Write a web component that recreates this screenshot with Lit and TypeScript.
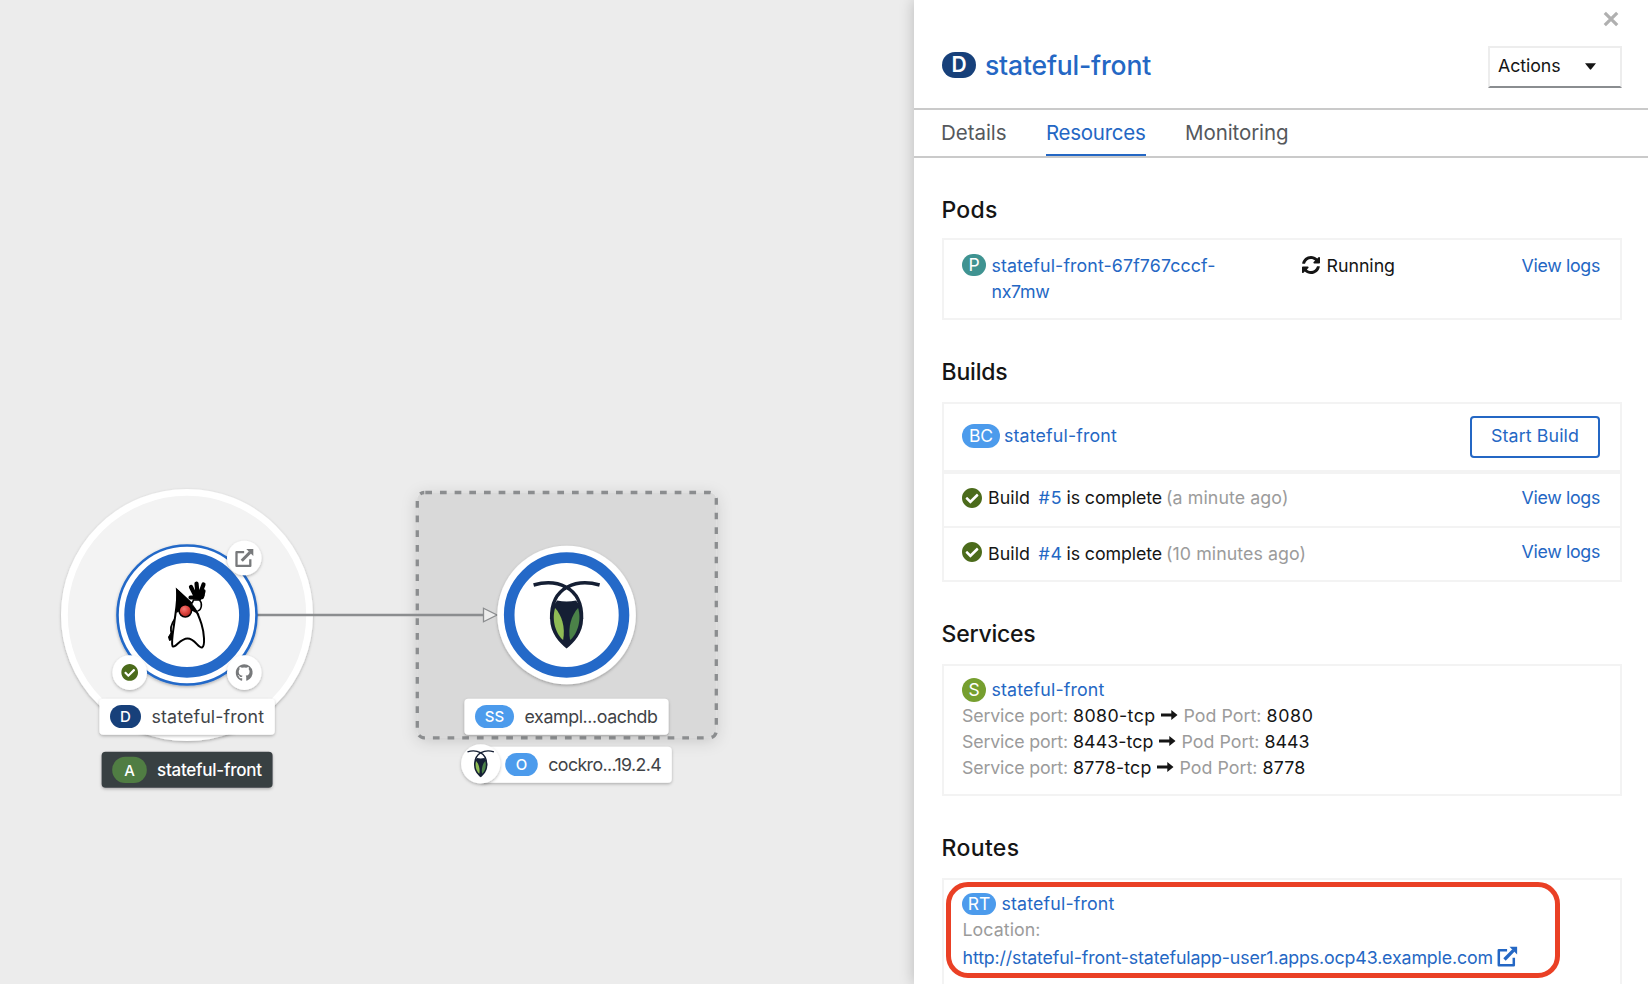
import { LitElement, html, svg, css } from "lit";
import { customElement, property } from "lit/decorators.js";

/** Text run tracked in or out so that it fills a given advance width. */
@customElement("fit-text")
class FitText extends LitElement {
  @property({ type: Number }) w = 0;
  @property() text = "";
  static styles = css`
    :host { display: inline-block; white-space: nowrap; }
  `;
  render() {
    return html`<span>${this.text}</span>`;
  }
  updated() {
    const s = this.renderRoot.querySelector("span") as HTMLElement;
    s.style.letterSpacing = "0px";
    const natural = s.getBoundingClientRect().width;
    if (this.w) s.style.letterSpacing = `${(this.w - natural) / this.text.length}px`;
  }
}

const t = (text: string, w: number) => html`<fit-text .text=${text} .w=${w}></fit-text>`;

const checkPath =
  "M504 256c0 136.967-111.033 248-248 248S8 392.967 8 256 119.033 8 256 8s248 111.033 248 248zM227.314 387.314l184-184c6.248-6.248 6.248-16.379 0-22.627l-22.627-22.627c-6.248-6.249-16.379-6.249-22.628 0L216 308.118l-70.059-70.059c-6.248-6.248-16.379-6.248-22.628 0l-22.627 22.627c-6.248 6.248-6.248 16.379 0 22.627l104 104c6.249 6.249 16.379 6.249 22.628.001z";
const syncPath =
  "M370.72 133.28C339.458 104.008 298.888 87.962 255.848 88c-77.458.068-144.328 53.178-162.791 126.85-1.344 5.363-6.122 9.15-11.651 9.15H24.103c-7.498 0-13.194-6.807-11.807-14.176C33.933 94.924 134.813 8 256 8c66.448 0 126.791 26.136 171.315 68.685L463.03 40.97C478.149 25.851 504 36.559 504 57.941V192c0 13.255-10.745 24-24 24H345.941c-21.382 0-32.09-25.851-16.971-40.971l41.75-41.749zM32 296h134.059c21.382 0 32.09 25.851 16.971 40.971l-41.75 41.75c31.262 29.273 71.835 45.319 114.876 45.28 77.418-.07 144.315-53.144 162.787-126.849 1.344-5.363 6.122-9.15 11.651-9.15h57.304c7.498 0 13.194 6.807 11.807 14.176C478.067 417.076 377.187 504 256 504c-66.448 0-126.791-26.136-171.315-68.685L48.97 471.03C33.851 486.149 8 475.441 8 454.059V320c0-13.255 10.745-24 24-24z";
const githubPath =
  "M8 0C3.58 0 0 3.58 0 8c0 3.54 2.29 6.53 5.47 7.59.4.07.55-.17.55-.38V13.2c-2 .4-2.6-.5-2.8-1-.1-.2-.5-1-.9-1.2-.3-.15-.7-.55 0-.56.65 0 1.1.6 1.25.83.72 1.2 1.87.87 2.33.66.07-.52.28-.87.51-1.07-1.78-.2-3.64-.89-3.64-3.95 0-.87.31-1.59.82-2.15-.08-.2-.36-1.02.08-2.12 0 0 .67-.21 2.2.82a7.6 7.6 0 0 1 4 0c1.53-1.04 2.2-.82 2.2-.82.44 1.1.16 1.92.08 2.12.51.56.82 1.27.82 2.15 0 3.07-1.87 3.75-3.65 3.95.29.25.54.73.54 1.48v2.87c0 .21.15.46.55.38A8 8 0 0 0 8 0z";

const extLink = svg`
  <path d="M9.600 3.200H1.300V18.200H16.300V10.800" fill="none" stroke="currentColor" stroke-width="2.500" stroke-linejoin="round"></path>
  <path d="M7 12.500L16 3.400" stroke="currentColor" stroke-width="3.300" fill="none"></path>
  <path d="M12 -.200H19.600V7.400Z" fill="currentColor"></path>`;

const roach = svg`
  <path d="M-9.500 -14.500Q0 -12.500 9.500 -14.500Q16.500 -6 16.500 4C16.500 18 7 28 0 33.500C-7 28 -16.500 18 -16.500 4Q-16.500 -6 -9.500 -14.500Z" fill="#151f34"></path>
  <path d="M-33 -30C-12 -36 16 -30 15 4M33 -30C12 -36 -16 -30 -15 4" fill="none" stroke="#151f34" stroke-width="3.400"></path>
  <path d="M-11.500 -7C-5 0 -1 12 -3.500 25C-10 20 -15.500 6 -11.500 -7Z" fill="#8fbc55"></path>
  <path d="M11.500 -7C5 0 1 12 3.500 25C10 20 15.500 6 11.500 -7Z" fill="#4b8248"></path>`;

const duke = svg`
  <path d="M175.500 618C171 624 170 630 172 634L170 640" fill="none" stroke="#000" stroke-width="1.800"></path>
  <path d="M171.500 632L174 634L172.500 639L169.500 640.500L168.500 637Z" fill="#000" stroke="#000" stroke-width="1"></path>
  <path d="M177 590C178 600 176 610 174.500 621C173 633 171 642 172.500 646C175 649 180 638.500 187.500 638.500C195 638.500 198 648 202 647.500C205.500 646 204 632 201.500 624C199 616 196 610 193.500 605Z" fill="#fff" stroke="#000" stroke-width="2"></path>
  <path d="M176.400 588.500C183 594 193 604 199.500 615L192.500 611L179 611.500L176.300 613Z" fill="#000"></path>
  <path d="M197.500 611C202 610 202.500 603 199.500 600L193.500 600L192 603.500" fill="#fff" stroke="#000" stroke-width="1.600"></path>
  <path d="M190.500 597.500L196 597.500M195.500 596L191 587M197.500 594L196.500 583.500M200 594L203.500 584.500M202 597L203.500 591" stroke="#000" stroke-width="4.200" stroke-linecap="round" fill="none"></path>
  <path d="M193 592L204 590L204.500 596L200.500 600.500L193 599Z" fill="#000"></path>
  <circle cx="185.300" cy="610.800" r="6.200" fill="url(#nose)" stroke="#000" stroke-width="1.600"></circle>`;

const txt = (x: number, y: number, w: number, s: string, cls: string) =>
  svg`<text x=${x} y=${y} textLength=${w} class=${cls}>${s}</text>`;

@customElement("topology-view")
class TopologyView extends LitElement {
  static styles = css`
    :host { display: block; background: #ececec; overflow: hidden; }
    svg { display: block; }
    text { font-family: Inter, "Liberation Sans", sans-serif; }
    .label { font-size: 17.8px; fill: #3f4347; }
    .dark { font-size: 17px; font-weight: 500; fill: #fff; }
    .badge { font-size: 15px; font-weight: 500; fill: #fff; text-anchor: middle; }
    .ext { color: #77797b; }
  `;
  render() {
    return html`<svg width="914" height="984" viewBox="0 0 914 984">
      <defs>
        <filter id="sh" x="-20%" y="-20%" width="140%" height="150%">
          <feDropShadow dx="0" dy="1.300" stdDeviation="1.500" flood-color="#030303" flood-opacity=".28"></feDropShadow>
        </filter>
        <filter id="soft" x="-20%" y="-20%" width="140%" height="140%">
          <feDropShadow dx="0" dy="3" stdDeviation="8" flood-color="#030303" flood-opacity=".16"></feDropShadow>
        </filter>
        <radialGradient id="nose" cx=".4" cy=".35" r=".7">
          <stop offset="0" stop-color="#f37b76"></stop>
          <stop offset=".5" stop-color="#df4640"></stop>
          <stop offset="1" stop-color="#a3201c"></stop>
        </radialGradient>
      </defs>

      <circle cx="187" cy="615" r="122.600" fill="#f3f3f3" stroke="#fff" stroke-width="6.800" filter="url(#sh)"></circle>
      <rect x="417.300" y="492.500" width="299" height="245.300" rx="7" fill="#d9d9d9" filter="url(#soft)"></rect>
      <rect x="417.300" y="492.500" width="299" height="245.300" rx="7" fill="none" stroke="#8b8d8f" stroke-width="3.300" stroke-dasharray="6.700 7.970" stroke-dashoffset="-1"></rect>
      <path d="M257 615H484" stroke="#8b8d8f" stroke-width="2.400"></path>
      <path d="M483.500 608.200V621.800L497 615Z" fill="#ededed" stroke="#8b8d8f" stroke-width="1.300"></path>

      <circle cx="187" cy="615" r="69.500" fill="#fff" stroke="#2469c8" stroke-width="2.600" filter="url(#sh)"></circle>
      <circle cx="187" cy="615" r="57.400" fill="#fff" stroke="#2469c8" stroke-width="10.600"></circle>
      ${duke}
      <circle cx="566.600" cy="615" r="69.300" fill="#fff" filter="url(#sh)"></circle>
      <circle cx="566.600" cy="615" r="57.400" fill="#fff" stroke="#2469c8" stroke-width="10.600"></circle>
      <g transform="translate(566.600 615)">${roach}</g>

      ${[[244.3, 558], [244.3, 672.6], [129.7, 672.6]].map(
        ([x, y]) => svg`<circle cx=${x} cy=${y} r="17.300" fill="#fff" filter="url(#sh)"></circle>`
      )}
      <g class="ext" transform="translate(235.300 549.200) scale(.92)">${extLink}</g>
      <g transform="translate(235.800 664.200) scale(1.060)" fill="#77797b"><path d=${githubPath}></path></g>
      <g transform="translate(121.100 663.800) scale(.0336)" fill="#4b6b1b"><path d=${checkPath}></path></g>

      <rect x="99.400" y="698.700" width="175.400" height="36" rx="4" fill="#fff" filter="url(#sh)"></rect>
      <rect x="110" y="705" width="31" height="23" rx="11.500" fill="#17407a"></rect>
      <text x="125.500" y="722" class="badge">D</text>
      ${txt(151.5, 722.8, 112.5, "stateful-front", "label")}

      <rect x="101.600" y="751.700" width="171" height="36" rx="4" fill="#393f43" filter="url(#sh)"></rect>
      <rect x="112.200" y="756.700" width="34.600" height="26.300" rx="13.100" fill="#507d43"></rect>
      <text x="129.500" y="775.600" class="badge">A</text>
      ${txt(157, 776, 105, "stateful-front", "dark")}

      <rect x="464.400" y="698.700" width="204.200" height="36" rx="4" fill="#fff" filter="url(#sh)"></rect>
      <rect x="475" y="705" width="39" height="23" rx="11.500" fill="#4c9bec"></rect>
      <text x="494.500" y="722" class="badge">SS</text>
      ${txt(524.5, 722.8, 133.5, "exampl...oachdb", "label")}

      <rect x="480" y="746.700" width="191.800" height="36" rx="4" fill="#fff" filter="url(#sh)"></rect>
      <circle cx="480.700" cy="763.800" r="19.600" fill="#fff" filter="url(#sh)"></circle>
      <g transform="translate(480.700 763.800) scale(.400)">${roach}</g>
      <rect x="505.200" y="753" width="32.600" height="23" rx="11.500" fill="#4c9bec"></rect>
      <text x="521.500" y="770" class="badge">O</text>
      ${txt(548.3, 770.6, 113.5, "cockro...19.2.4", "label")}
    </svg>`;
  }
}

const check = html`<svg class="check" viewBox="8 8 496 496"><path fill="#4b6b1b" d=${checkPath}></path></svg>`;

@customElement("side-panel")
class SidePanel extends LitElement {
  static styles = css`
    :host {
      display: flex; flex-direction: column; background: #fff; color: #151515;
      box-shadow: 0 0 14px rgba(3, 3, 3, .22); font-size: 17.8px; line-height: 26px; overflow: visible;
    }
    * { box-sizing: border-box; }
    a { color: #2467c4; }
    .muted { color: #9b9b9b; }
    .head, .tabs, .body, h2, .box { flex: none; }
    .head { height: 110px; border-bottom: 2px solid #cacaca; padding: 11px 26px 0 28px; display: flex; flex-direction: column; }
    .x { align-self: flex-end; width: 16px; height: 16px; margin-right: 3px; }
    .titlebar { display: flex; justify-content: space-between; margin-top: 19px; }
    .title { display: flex; align-items: center; height: 38px; font-size: 26.5px; font-weight: 500; color: #2467c4; gap: 9px; }
    .badge { display: inline-flex; align-items: center; justify-content: center; color: #fff; border-radius: 13px; height: 24px; font-size: 17.5px; flex: none; }
    .bd { width: 34px; height: 26px; background: #17407a; font-size: 21px; font-weight: 600; }
    .bp { width: 24px; height: 22px; background: #3f9391; border-radius: 11px; }
    .bb { width: 38px; background: #4c9bec; }
    .bs { width: 24px; background: #769f2f; }
    .br { width: 34px; height: 22px; background: #4c9bec; border-radius: 11px; }
    .actions { width: 134px; height: 42px; border: 2px solid #ededed; border-bottom-color: #8a8d90; display: flex; align-items: center; padding: 0 24px 3px 8px; justify-content: space-between; }
    .caret { width: 11px; height: 7px; margin-top: 2px; }
    .tabs { display: flex; gap: 38.5px; height: 48px; border-bottom: 2px solid #cacaca; padding: 0 26px; font-size: 20.5px; line-height: 45px; color: #55585c; }
    .tab { height: 46px; padding: 0 1px; }
    .active { color: #2467c4; border-bottom: 2px solid #2467c4; padding: 0; }
    .body { padding: 36px 26px 0 28px; display: flex; flex-direction: column; }
    h2 { margin: 0 0 0 -.5px; font-size: 23px; line-height: 33px; font-weight: 500; height: 46px; }
    h2.first { height: 44px; }
    .box { border: 2px solid #f3f3f3; padding: 0 20px 0 18px; }
    .row { display: flex; align-items: flex-start; }
    .pods { height: 82px; margin-bottom: 36px; padding-top: 13px; }
    .pods .badge { margin-top: 1px; margin-right: 5.5px; }
    .pn { width: 310px; display: flex; flex-direction: column; }
    .sync { width: 18px; height: 18px; margin: 3px 7px 0 0; }
    .end { margin-left: auto; }
    .bc { height: 66px; padding-top: 12px; }
    .bc .badge { margin: 8px 4px 0 0; }
    .bc .nm { padding-top: 6.5px; }
    .btn { border: 2px solid #2467c4; border-radius: 4px; width: 130px; height: 42px; text-align: center; line-height: 35px; color: #2467c4; }
    .bl { height: 56px; border-top: 4px solid #f3f3f3; padding-top: 10.5px; }
    .bl2 { height: 54px; border-top: 2px solid #f3f3f3; padding-top: 10.5px; }
    .bl2 .msg { padding-top: 2px; }
    .check { width: 20px; height: 20px; margin: 3px 6px 0 0; flex: none; }
    .num { margin: 0 4px 0 8.5px; }
    .ago { margin-left: 4px; }
    .builds { height: 180px; margin-bottom: 36px; padding: 0; }
    .builds > .row { padding-left: 18px; padding-right: 20px; }
    .svc { height: 132px; padding-top: 11px; margin-bottom: 36px; }
    .svc .badge { margin: 1px 5.5px 0 0; }
    .arrow { width: 17px; height: 12px; margin: 6px 6px 0 5px; }
    .val { margin-left: 5px; }
    .route { height: 150px; padding: 2px 0 0 2px; }
    .hl { width: 614px; height: 96px; border: 5px solid #ea4025; border-radius: 22px; padding: 4px 0 0 11.5px; }
    .hl .badge { margin: 2px 5.5px 0 -.5px; }
    .loc { display: block; height: 28px; }
    .ext { width: 21px; height: 20px; margin: 2px 0 0 4px; color: #2467c4; overflow: visible; }
  `;
  port(p: string, w1: number, w2: number) {
    return html`<div class="row">
      <span class="muted">${t("Service port:", 106)}</span><span class="val">${t(`${p}-tcp`, w1)}</span>
      <svg class="arrow" viewBox="0 0 17 12"><path d="M0 4.600H10.300V1L16.500 6L10.300 11V7.400H0Z" fill="#151515"></path></svg>
      <span class="muted">${t("Pod Port:", 78)}</span><span class="val">${t(p, w2)}</span>
    </div>`;
  }
  build(cls: string, n: string, ago: string, w: number) {
    return html`<div class="row ${cls}">
      ${check}
      <div class="row msg">${t("Build", 42)}<a class="num">${t(n, 24)}</a>${t("is complete", 95.5)}<span class="muted ago">${t(ago, w)}</span></div>
      <a class="end">${t("View logs", 78.5)}</a>
    </div>`;
  }
  render() {
    return html`
      <div class="head">
        <svg class="x" viewBox="0 0 16 16"><path d="M1.800 1.800L14.200 14.200M14.200 1.800L1.800 14.200" stroke="#b0b0b0" stroke-width="3.200"></path></svg>
        <div class="titlebar">
          <div class="title"><span class="badge bd">D</span>${t("stateful-front", 166)}</div>
          <div class="actions">${t("Actions", 62.5)}<svg class="caret" viewBox="0 0 11 7"><path d="M0 .300H11L6.200 6.300Q5.500 7 4.800 6.300Z" fill="#151515"></path></svg></div>
        </div>
      </div>
      <div class="tabs">
        <span class="tab">${t("Details", 65.5)}</span><span class="tab active">${t("Resources", 99.5)}</span><span class="tab">${t("Monitoring", 103.5)}</span>
      </div>
      <div class="body">
        <h2 class="first">${t("Pods", 56)}</h2>
        <div class="box pods row">
          <span class="badge bp">P</span>
          <a class="pn">${t("stateful-front-67f767cccf-", 224)}${t("nx7mw", 58)}</a>
          <svg class="sync" viewBox="8 8 496 496"><path fill="#151515" d=${syncPath}></path></svg>
          ${t("Running", 68.5)}
          <a class="end">${t("View logs", 78.5)}</a>
        </div>
        <h2>${t("Builds", 66)}</h2>
        <div class="box builds">
          <div class="row bc"><span class="badge bb">BC</span><a class="nm">${t("stateful-front", 113)}</a><span class="btn end">${t("Start Build", 88)}</span></div>
          ${this.build("bl", "#5", "(a minute ago)", 122.5)}
          ${this.build("bl2", "#4", "(10 minutes ago)", 140)}
        </div>
        <h2>${t("Services", 94)}</h2>
        <div class="box svc">
          <div class="row"><span class="badge bs">S</span><a>${t("stateful-front", 113)}</a></div>
          ${this.port("8080", 82.5, 47)}${this.port("8443", 80.5, 45)}${this.port("8778", 78.5, 43)}
        </div>
        <h2>${t("Routes", 78)}</h2>
        <div class="box route">
          <div class="hl">
            <div class="row"><span class="badge br">RT</span><a class="nm">${t("stateful-front", 113)}</a></div>
            <span class="muted loc">${t("Location:", 78)}</span>
            <div class="row"><a>${t("http://stateful-front-statefulapp-user1.apps.ocp43.example.com", 530.5)}</a><svg class="ext" viewBox="0 0 20 20">${extLink}</svg></div>
          </div>
        </div>
      </div>`;
  }
}

@customElement("app-root")
class AppRoot extends LitElement {
  static styles = css`
    :host { display: grid; grid-template-columns: 914px 1fr; height: 984px; overflow: hidden; font-family: Inter, "Liberation Sans", sans-serif; }
    side-panel { position: relative; min-height: 0; height: 984px; }
  `;
  render() {
    return html`<topology-view></topology-view><side-panel></side-panel>`;
  }
}
